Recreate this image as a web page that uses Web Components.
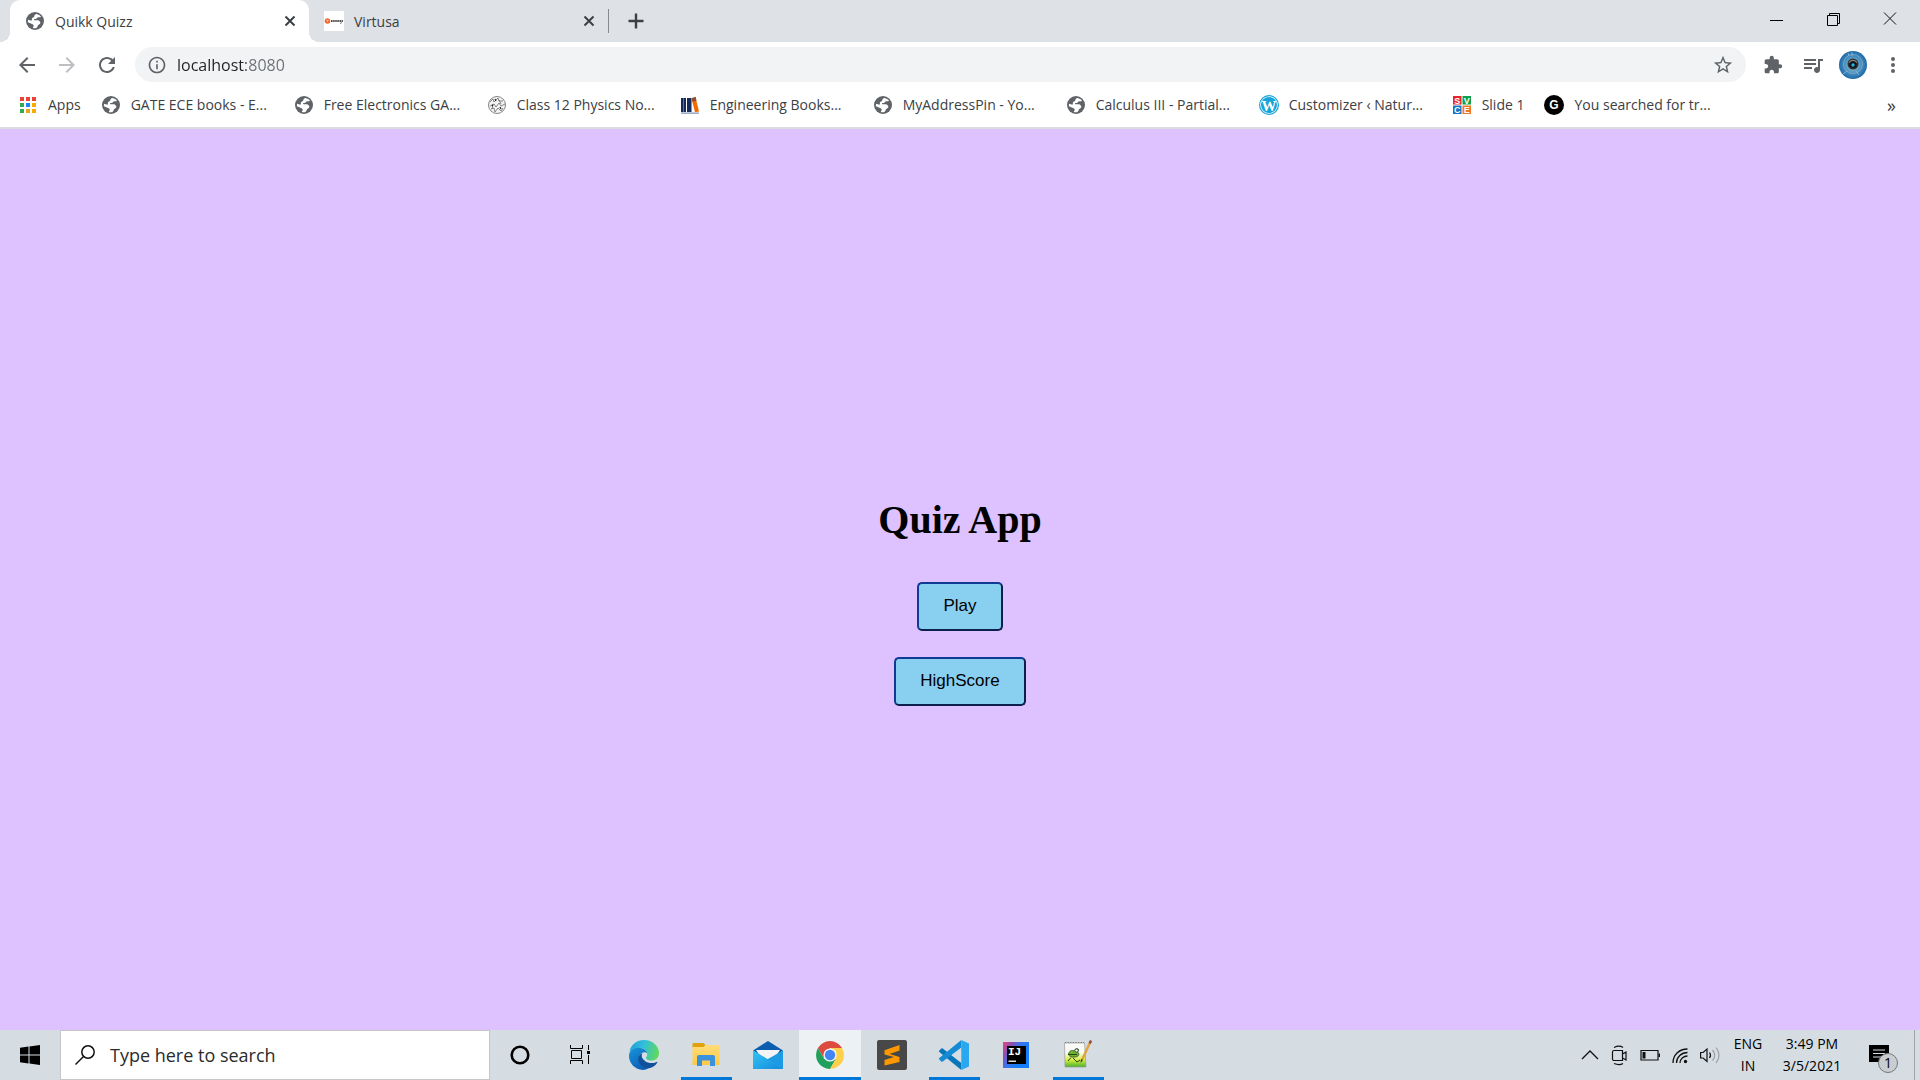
<!DOCTYPE html>
<html lang="en">
<head>
<meta charset="utf-8">
<title>Quikk Quizz</title>
<style>
  html, body { margin: 0; height: 100%; }
  body { font-family: "Open Sans", "Noto Sans", sans-serif; font-size: 14px; color: #3c4043; }
</style>
</head>
<body>
<desktop-screen>
  <browser-chrome slot="top"></browser-chrome>
  <quiz-home></quiz-home>
  <task-bar slot="bottom"></task-bar>
</desktop-screen>

<script>
const globe = `<circle cx="10" cy="10" r="9" fill="#5f6368"/>
  <path d="M11.500 2.900c2 .4 3.500 1.300 4.500 2.900-1 .9-2.200.4-3.300.7-1 .3-.8 1.200-1.800 1.500-.8.200-1.400-.2-1.800.3-.3.600.3 1 1 1h2.700c1.500.2 2.400 1.300 2.600 2.600-.4 1.300-1.600 1.300-2.200 2.200-.6 1-.6 2.200-1.800 2.900-1 .4-2.400.3-3.500-.1 0-.9.900-1.500.8-2.400-.1-.8-1-1.200-1.700-1.500l-4.100-1.700c-.1-1 0-1.800.2-2.600 1.300.1 2.200 1 3.400.9.700-.2.400-1 .3-1.700.1-1 1.300-1.200 2-1.800.8-.8.500-1.600 1.100-2.300.4-.5 1-.8 1.600-.9z" fill="#fff"/>`;

const ICONS = {
  globe: [20, globe],
  close: [20, `<path d="M5.500 5.500l9 9m0-9l-9 9" stroke="#3c4043" stroke-width="2"/>`],
  plus: [20, `<path d="M10 2.500v15M2.500 10h15" stroke="#3c4043" stroke-width="2.400"/>`],
  examly: [20, `<path fill="#fff" d="M0 0h20v20H0z"/><circle cx="3.500" cy="10" r="2.800" fill="#f26a2e"/><path d="M2.300 9.300h2.500M3.500 9v2" stroke="#fbb" stroke-width=".8"/><path d="M7 10h12" stroke="#555" stroke-width="1.800" stroke-dasharray="1.600 .5"/><path d="M17.500 11l-1 2" stroke="#777"/>`],
  back: [24, `<path fill="#5f6368" d="M20 11H7.830l5.590-5.590L12 4l-8 8 8 8 1.410-1.410L7.830 13H20v-2z"/>`],
  forward: [24, `<path fill="#bdbfc2" d="M4 11h12.170l-5.590-5.590L12 4l8 8-8 8-1.410-1.410L16.170 13H4v-2z"/>`],
  reload: [24, `<path fill="#5f6368" d="M17.650 6.350C16.200 4.900 14.210 4 12 4c-4.420 0-7.990 3.580-7.990 8s3.570 8 7.990 8c3.730 0 6.840-2.550 7.730-6h-2.080c-.82 2.330-3.040 4-5.650 4-3.310 0-6-2.690-6-6s2.690-6 6-6c1.660 0 3.140.69 4.220 1.780L13 11h7V4l-2.350 2.350z"/>`],
  info: [24, `<path fill="#5f6368" d="M11 17h2v-6h-2v6zm1-15C6.480 2 2 6.480 2 12s4.480 10 10 10 10-4.480 10-10S17.520 2 12 2zm0 18c-4.410 0-8-3.590-8-8s3.590-8 8-8 8 3.590 8 8-3.590 8-8 8zM11 9h2V7h-2v2z"/>`],
  star: [24, `<path fill="#5f6368" d="M22 9.240l-7.190-.62L12 2 9.190 8.630 2 9.240l5.460 4.730L5.820 21 12 17.270 18.180 21l-1.630-7.030L22 9.240zM12 15.400l-3.760 2.270 1-4.280-3.320-2.880 4.380-.38L12 6.100l1.710 4.040 4.380.38-3.320 2.880 1 4.280L12 15.400z"/>`],
  puzzle: [24, `<path fill="#5f6368" d="M20.500 11H19V7c0-1.100-.9-2-2-2h-4V3.500C13 2.120 11.880 1 10.500 1S8 2.120 8 3.500V5H4c-1.100 0-1.990.9-1.990 2v3.800H3.500c1.490 0 2.700 1.210 2.700 2.700s-1.210 2.700-2.700 2.700H2V20c0 1.100.9 2 2 2h3.800v-1.500c0-1.490 1.210-2.700 2.700-2.700 1.490 0 2.700 1.210 2.700 2.700V22H17c1.100 0 2-.9 2-2v-4h1.500c1.380 0 2.500-1.120 2.500-2.500S21.880 11 20.500 11z"/>`],
  music: [24, `<path fill="#5f6368" d="M15 6H3v2h12V6zm0 4H3v2h12v-2zM3 16h8v-2H3v2zM17 6v8.180c-.31-.11-.65-.18-1-.18-1.660 0-3 1.340-3 3s1.340 3 3 3 3-1.340 3-3V8h3V6h-5z"/>`],
  avatar: [28, `<defs><radialGradient id="a"><stop offset=".25" stop-color="#8fb6cb"/><stop offset=".55" stop-color="#4e94c2"/><stop offset="1" stop-color="#1e69a8"/></radialGradient></defs><circle cx="14" cy="14" r="14" fill="url(#a)"/><circle cx="14" cy="13" r="9.500" fill="none" stroke="#7db0cf" stroke-width=".8"/><path d="M13 1v4M9 2l1 3M4 23l4-3M20 24l-3-4" stroke="#9cc3da" stroke-width=".7"/><circle cx="14" cy="13" r="5.500" fill="#2b2e33"/><path d="M9.500 11.500a5 5 0 0 1 9 0l-2 .5h-5z" fill="#8d8c86"/><circle cx="14" cy="13.500" r="3.500" fill="#10151d"/><circle cx="14" cy="14" r="1.700" fill="#25b4dc"/>`],
  dots: [20, `<g fill="#5f6368"><circle cx="10" cy="4" r="2"/><circle cx="10" cy="10" r="2"/><circle cx="10" cy="16" r="2"/></g>`],
  apps: [20, `<path fill="#ea4335" d="M2 2h4v4H2zm6 0h4v4H8zm6 0h4v4h-4z"/><path fill="#34a853" d="M2 8h4v4H2zm0 6h4v4H2z"/><path fill="#1a87f0" d="M8 8h4v4H8z"/><path fill="#f9ab00" d="M14 8h4v4h-4zm0 6h4v4h-4z"/><path fill="#e9a51b" d="M8 14h4v4H8z"/>`],
  physics: [20, `<circle cx="10" cy="10" r="8.500" fill="#f4f4f4" stroke="#777" stroke-width=".9"/><path d="M3 7l3-3 1 3 4-4 1 3 4 0M3 11l4-2 2 3 3-4 2 3 4-2M4 14l3-1 1 4 3-4 3 3 2-3M6 9l-1 5M12 5l2 4" fill="none" stroke="#777" stroke-width=".9"/><path d="M8 4l1 2M13 12l1 2M5 10l1 1" stroke="#222" stroke-width="1.200"/>`],
  books: [20, `<path fill="#152c5b" d="M1 3h5v14H1zm6 0h4v14H7z"/><path stroke="#7d91b5" stroke-width=".7" d="M3.500 3v14"/><path fill="#f26a00" d="M11.500 3.500l4-1.500 3.500 14.500-4 .8z"/><path fill="#914f2f" d="M11.500 3.200l4-1.500 1 4-4 1z"/><path fill="#8195b6" d="M11 3h1v14h-1zM1 17.500h18v1.200H1z"/>`],
  wordpress: [20, `<circle cx="10" cy="10" r="9.400" fill="#fff" stroke="#16a4da" stroke-width="1.200"/><circle cx="10" cy="10" r="8" fill="#16a4da"/><text x="10" y="15.500" text-anchor="middle" font-family="Liberation Serif" font-size="15" font-weight="700" fill="#fff">W</text>`],
  svce: [20, `<path fill="#e8232a" d="M1 1h8.500v8.500H1z"/><path fill="#0ea04b" d="M10.500 1H19v8.500h-8.500z"/><path fill="#1574c4" d="M1 10.500h8.500V19H1z"/><path fill="#ee7722" d="M10.500 10.500H19V19h-8.500z"/><g fill="#fff" font-family="Liberation Sans" font-weight="700" font-size="9" text-anchor="middle"><text x="5.300" y="8.500">S</text><text x="14.800" y="8.500">V</text><text x="5.300" y="18">C</text><text x="14.800" y="18">E</text></g>`],
  gmark: [20, `<circle cx="10" cy="10" r="10"/><text x="10" y="14.200" text-anchor="middle" font-family="Liberation Sans" font-size="12" font-weight="700" fill="#fff">G</text>`],
  min: [20, `<path d="M4 12.500h13" stroke="#000"/>`],
  max: [20, `<path d="M4.500 7.500h10v10h-10zM6.500 7.500v-2h10v10h-2" fill="none" stroke="#000"/>`],
  exit: [20, `<path d="M4 4.500l12 12m0-12l-12 12" stroke="#111"/>`],
  windows: [20, `<path d="M0 2.800L8.500 1.600V9.500H0zM9.500 1.400L20 0v9.500H9.500zM0 10.500h8.500v8L0 17.300zM9.500 10.500H20V20L9.500 18.600z"/>`],
  search: [20, `<circle cx="13" cy="7" r="6.200" fill="none" stroke="#111" stroke-width="1.500"/><path d="M8.500 11.500L.5 19.500" stroke="#111" stroke-width="1.500"/>`],
  cortana: [20, `<circle cx="10" cy="10" r="8.300" fill="none" stroke="#000" stroke-width="2.600"/>`],
  taskview: [20, `<path d="M.5 0v3.500h12V0M.5 19v-3.500h12V19M1.500 5.500h10v8h-10zM18.500 0v5M18.500 10v9" fill="none" stroke="#000"/><path d="M17 6h3v3h-3z"/>`],
  edge: [32, `<defs><linearGradient id="e1" x1="0" y1=".3" x2="1" y2=".5"><stop offset="0" stop-color="#219fd8"/><stop offset=".45" stop-color="#31bfdc"/><stop offset="1" stop-color="#60d95a"/></linearGradient><linearGradient id="e2" x1="0" y1="0" x2=".5" y2="1"><stop offset="0" stop-color="#1795da"/><stop offset="1" stop-color="#0e60b5"/></linearGradient></defs>
    <path fill="url(#e1)" d="M1.500 13C2.500 5.500 9 1 16 1c9 0 15 6.500 15 13 0 5-3.500 7.500-7.500 7.500-4 0-5.500-1.700-5.500-2.600 0-.8 1.200-1.300 1.200-3.600 0-3-3-6.300-7.700-6.300C6 9 2.500 11.500 1.500 13z"/>
    <path fill="url(#e2)" d="M1 17C1 12 5 8.800 10.500 8.800c4.500 0 8.200 2.800 8.700 5.400-1-1-2-1.200-3.200-1-4 .8-5.500 4-4.500 7.800 1.200 4.500 5 7.500 9.500 7.800C19 30.400 17 31 15 31 7 30.500 1 24.500 1 17z"/>
    <path fill="#11519c" d="M12 15.500C10 18 9.500 22 12 25.300c2.500 3.500 6.500 4.300 10 3.700 3-.8 5.800-2.800 7.300-5.500.3-.6-.2-.9-.7-.6-4 2-8.800 1.400-11.500-.9-2.400-1.900-4.600-4.500-2.600-7.800-.8.1-1.800.5-2.500 1.300z"/>`],
  folder: [32, `<defs><linearGradient id="f" x1="0" y1="0" x2="0" y2="1"><stop offset="0" stop-color="#ffdc7a"/><stop offset="1" stop-color="#fdc943"/></linearGradient></defs><path fill="#e0a10a" d="M2.500 5c0-.6.400-1 1-1h10l2 2-2 3h-11z"/><path fill="url(#f)" d="M2.500 8h11l2-2h13c.6 0 1 .4 1 1v19h-27z"/><path fill="#3a92dc" d="M7 27V18c0-1.200.8-2 2-2h14c1.200 0 2 .8 2 2v9h-5v-5.500h-8V27z"/>`],
  mail: [32, `<defs><linearGradient id="m" x1="0" y1="0" x2="1" y2="1"><stop offset="0" stop-color="#32c5f4"/><stop offset="1" stop-color="#1689dd"/></linearGradient></defs><path fill="#0c5caf" d="M1 11.500L16 2l15 9.500-15 11z"/><path fill="#f4f4f4" d="M4 11h24l-6 9H10z"/><path fill="#28b5ee" d="M1 11.500L31 30H1z"/><path fill="#1d9ae4" d="M31 11.500V30L15 20.500z"/><path fill="url(#m)" d="M1 11.500l16 9.500L31 30H1z"/>`],
  chrome: [32, `<path fill="#dd4b3e" d="M3.900 9A14 14 0 0 1 28.100 9H16l-6 10.500z"/><path fill="#1fa05d" d="M3.900 9A14 14 0 0 0 16 30l6.100-10.500L16 22l-6.100-2.500z"/><path fill="#fed049" d="M28.100 9A14 14 0 0 1 16 30l6.100-10.500L22 12l-6-3z"/><circle cx="16" cy="16" r="6.600" fill="#f3f3f3"/><circle cx="16" cy="16" r="5.200" fill="#4285f4"/>`],
  sublime: [32, `<rect x="1" y="1" width="30" height="30" rx="2" fill="#484848"/><path fill="#ff9800" d="M8.500 11.200L23.500 6v5.500L13.500 15l10 3v5L8.500 26.500V21l9.500-3-9.500-2.500z"/>`],
  vscode: [32, `<path fill="#0877ba" d="M1.300 11.500l2-2c.5-.4 1-.4 1.500 0L23.300 24v7L1.300 13c-.5-.5-.5-1 0-1.500z"/><path fill="#148bd2" d="M1.300 20.500l2 2c.5.4 1 .4 1.500 0L23.300 8.500V1L1.300 19c-.5.500-.5 1 0 1.500z"/><path fill="#29a8ef" d="M23.300 1L31 4.500v23L23.300 31z"/>`],
  idea: [32, `<defs><linearGradient id="j" x1="0" y1="0" x2=".8" y2=".5"><stop offset="0" stop-color="#e8467c"/><stop offset=".35" stop-color="#8c4eb5"/><stop offset=".6" stop-color="#3f72e8"/><stop offset="1" stop-color="#157dfa"/></linearGradient></defs><path fill="url(#j)" d="M3 3h26v26H3z"/><path d="M7 7h19v18H7z"/><text x="8" y="16" font-family="Liberation Mono" font-size="11" font-weight="700" fill="#fff">IJ</text><path fill="#ddd" d="M8.500 21.500H16V23H8.500z"/>`],
  notepad: [32, `<defs><linearGradient id="n" x1="0" y1="0" x2="0" y2="1"><stop offset=".4" stop-color="#f9faf5"/><stop offset=".7" stop-color="#d8ed3e"/><stop offset="1" stop-color="#46b32c"/></linearGradient></defs><path fill="url(#n)" stroke="#999" stroke-width=".7" d="M2.500 4h20l1.500 24H3z"/><path stroke="#777" stroke-dasharray="1.200 1.400" d="M3 3.500h19"/><path fill="#6cb52c" stroke="#24431a" stroke-width=".7" d="M6.500 15c.5-3 3.500-4.500 5.500-3 1-2.500 4-3 4.500-1.500s-1 2.500-1 2.500c2.500 2 1.500 4.500-2 5s-7-.5-7-3z"/><circle cx="14.500" cy="11.500" r="1.600" fill="#fff" stroke="#222" stroke-width=".7"/><path d="M9 18.500L6 22m5-3l4 4 3-2M6 15.500h9" stroke="#24431a" stroke-width="1" fill="none"/><path d="M28.500 2.500L20 21" stroke="#e0a23c" stroke-width="2.400"/><path d="M29 1.500l-1.300 3" stroke="#914b44" stroke-width="2.400"/><path fill="#333" d="M19 20l2 1-2.500 3z"/>`],
  chevron: [20, `<path d="M2 14l8-8 8 8" fill="none" stroke="#111" stroke-width="1.300"/>`],
  meet: [20, `<path d="M4 5.500h8.500v10H4c-.8 0-1.500-.7-1.500-1.500V7c0-.8.7-1.500 1.500-1.500zM12.500 9l3.500-2v8l-3.500-2zM4 2.500c3-1.500 7-1.500 9 0M4 18.500c3 1.200 7 1.200 9 0" fill="none" stroke="#111" stroke-width="1.200"/>`],
  battery: [20, `<path d="M1 5.500h17v9.500H1z" fill="none" stroke="#111" stroke-width="1.200"/><path d="M2.500 7H5.500v6.500H2.500zM18.500 8.500H20V12h-1.500z" fill="#111"/>`],
  wifi: [20, `<g fill="none" stroke="#111" stroke-width="1.300"><path d="M3 18C3 10 9 4 17.500 4" /><path d="M6.500 18c0-6 5-10.500 11-10.500"/><path d="M10 18c0-4 3.500-7 7.500-7"/></g><circle cx="15.500" cy="16.500" r="1.700" fill="#111"/>`],
  volume: [20, `<path d="M.6 7.500h2.500L7 4v12.500L3.100 13H.6z" fill="none" stroke="#111" stroke-width="1.200"/><path d="M9.500 7.500c1.500 2 1.500 3.500 0 5.500" fill="none" stroke="#111" stroke-width="1.200"/><path d="M12.500 5c3 3.500 3 7 0 10.500M16 2.500c4 5 4 10.500 0 15.500" fill="none" stroke="#999fa4" stroke-width="1.200"/>`],
  notes: [22, `<path d="M1 1h20v17h-6v4l-4-4H1z"/><path d="M5 6h12M5 9.500h12M5 13h12" stroke="#d5dde3" stroke-width="1.200"/>`]
};

function define(name, html, setup) {
  const template = document.createElement('template');
  template.innerHTML = html;
  customElements.define(name, class extends HTMLElement {
    connectedCallback() {
      if (this.shadowRoot) return;
      this.attachShadow({ mode: 'open' }).append(template.content.cloneNode(true));
      if (setup) setup(this, this.shadowRoot);
    }
  });
}

define('app-icon', `<style>:host{display:block;flex:none;line-height:0}svg{display:block;overflow:visible}</style>`, (host, root) => {
  const [box, art] = ICONS[host.getAttribute('name')];
  const size = host.getAttribute('size') || box;
  const holder = document.createElement('div');
  holder.innerHTML = `<svg width="${size}" height="${size}" viewBox="0 0 ${box} ${box}" aria-hidden="true">${art}</svg>`;
  root.append(holder.firstChild);
});

define('icon-button', `
  <style>
    :host { display: block; flex: none; }
    button { width: 100%; height: 100%; min-height: 20px; border: 0; padding: 0; background: none; display: flex; align-items: center; justify-content: center; }
  </style>
  <button><slot></slot></button>`,
  (host, root) => root.querySelector('button').setAttribute('aria-label', host.getAttribute('label')));

define('browser-tab', `
  <style>
    :host { display: flex; align-items: center; box-sizing: border-box; width: 299px; height: 42px; padding: 0 9px 0 15px; position: relative; }
    :host([active]) { background: #fff; border-radius: 10px 10px 0 0; }
    :host([active])::before, :host([active])::after { content: ""; position: absolute; bottom: 0; width: 10px; height: 10px; }
    :host([active])::before { right: 100%; background: radial-gradient(circle at 0 0, #dee1e6 10px, #fff 10px); }
    :host([active])::after { left: 100%; background: radial-gradient(circle at 100% 0, #dee1e6 10px, #fff 10px); }
    .title { flex: 1; margin-left: 10px; white-space: nowrap; }
  </style>
  <slot name="icon"></slot><span class="title"><slot></slot></span>
  <icon-button label="Close tab"><app-icon name="close"></app-icon></icon-button>`);

define('bookmark-link', `
  <style>
    :host { display: block; flex: none; }
    a { display: flex; align-items: center; gap: 10px; color: inherit; text-decoration: none; white-space: nowrap; }
    :host([wide]) a { width: 173px; }
  </style>
  <a href="#"><span><slot></slot></span></a>`,
  (host, root) => {
    const icon = document.createElement('app-icon');
    icon.setAttribute('name', host.getAttribute('icon'));
    root.querySelector('a').prepend(icon);
  });

define('browser-chrome', `
  <style>
    :host { display: block; background: #fff; border-bottom: 2px solid #d9dce0; }
    .strip { display: flex; background: #dee1e6; height: 42px; padding: 0 2px 0 10px; }
    .strip .new { width: 54px; border-left: 1px solid #85888d; height: 24px; margin-top: 9px; }
    .window { margin-left: auto; display: flex; }
    .window icon-button { width: 57px; height: 36px; }
    .tools { display: flex; align-items: center; height: 35px; padding: 5px 7px 0; }
    .tools > icon-button { width: 40px; }
    .address { flex: 1; display: flex; align-items: center; height: 35px; margin: 0 7px 0 8px; padding: 0 12px; border-radius: 18px; background: #f1f3f4; }
    input { flex: 1; min-width: 0; border: 0; outline: 0; padding: 0; margin: 0 10px; font: inherit; font-size: 16px; height: 24px; color: #202124;
      background: linear-gradient(90deg, #202124 69px, #6b6f74 69px); -webkit-background-clip: text; background-clip: text; -webkit-text-fill-color: transparent; }
    nav { display: flex; align-items: center; gap: 20px; height: 45px; padding: 0 24px 0 18px; }
    .more { margin-left: auto; border: 0; padding: 0; background: none; font: inherit; font-size: 18px; line-height: 18px; color: #3c4043; }
  </style>
  <div class="strip">
    <browser-tab active><app-icon slot="icon" name="globe"></app-icon>Quikk Quizz</browser-tab>
    <browser-tab><app-icon slot="icon" name="examly"></app-icon>Virtusa</browser-tab>
    <icon-button class="new" label="New tab"><app-icon name="plus"></app-icon></icon-button>
    <div class="window">
      <icon-button label="Minimize"><app-icon name="min"></app-icon></icon-button>
      <icon-button label="Restore"><app-icon name="max"></app-icon></icon-button>
      <icon-button label="Close"><app-icon name="exit"></app-icon></icon-button>
    </div>
  </div>
  <div class="tools">
    <icon-button label="Back"><app-icon name="back"></app-icon></icon-button>
    <icon-button label="Forward"><app-icon name="forward"></app-icon></icon-button>
    <icon-button label="Reload"><app-icon name="reload"></app-icon></icon-button>
    <div class="address">
      <app-icon name="info" size="20"></app-icon>
      <input type="text" aria-label="Address" value="localhost:8080">
      <icon-button label="Bookmark this page"><app-icon name="star" size="22"></app-icon></icon-button>
    </div>
    <icon-button label="Extensions"><app-icon name="puzzle" size="20"></app-icon></icon-button>
    <icon-button label="Media"><app-icon name="music"></app-icon></icon-button>
    <icon-button label="Profile"><app-icon name="avatar"></app-icon></icon-button>
    <icon-button label="Menu"><app-icon name="dots"></app-icon></icon-button>
  </div>
  <nav>
    <bookmark-link icon="apps">Apps</bookmark-link>
    <bookmark-link icon="globe" wide>GATE ECE books - E...</bookmark-link>
    <bookmark-link icon="globe" wide>Free Electronics GA...</bookmark-link>
    <bookmark-link icon="physics" wide>Class 12 Physics No...</bookmark-link>
    <bookmark-link icon="books" wide>Engineering Books...</bookmark-link>
    <bookmark-link icon="globe" wide>MyAddressPin - Yo...</bookmark-link>
    <bookmark-link icon="globe" wide>Calculus III - Partial...</bookmark-link>
    <bookmark-link icon="wordpress" wide>Customizer ‹ Natur...</bookmark-link>
    <bookmark-link icon="svce">Slide 1</bookmark-link>
    <bookmark-link icon="gmark" wide>You searched for tr...</bookmark-link>
    <button class="more" aria-label="More bookmarks">»</button>
  </nav>`);

define('quiz-button', `
  <style>
    :host { display: block; }
    button { display: block; height: 49px; padding: 0 24px; font: 17px "Liberation Sans", Arial, sans-serif; color: #000; background: #89cff0; border: 2px solid; border-color: #103a94 #0c2050 #0c2050 #103a94; border-radius: 5px; }
  </style>
  <button><slot></slot></button>`);

define('quiz-home', `
  <style>
    :host { display: flex; flex: 1; flex-direction: column; align-items: center; justify-content: center; gap: 26px; padding-top: 43px; background: #dec1ff; }
    h1 { margin: 0 0 13px; font: 700 40px/46px "Liberation Serif", "Times New Roman", serif; color: #000; }
  </style>
  <h1>Quiz App</h1>
  <quiz-button>Play</quiz-button>
  <quiz-button>HighScore</quiz-button>`);

define('task-button', `
  <style>
    :host { display: block; flex: none; width: 62px; }
    button { width: 100%; height: 100%; border: 0; padding: 0; background: none; display: flex; align-items: center; justify-content: center; }
    :host([running]) button { background: linear-gradient(#0078d7, #0078d7) center bottom / 51px 3px no-repeat; }
    :host([current]) button { background: linear-gradient(#0078d7, #0078d7) center bottom / 100% 3px no-repeat #eef1f4; }
  </style>
  <button><slot></slot></button>`,
  (host, root) => root.querySelector('button').setAttribute('aria-label', host.getAttribute('label')));

define('task-bar', `
  <style>
    :host { display: flex; height: 50px; background: #d5dde3; color: #000; }
    .narrow { width: 60px; }
    .search { display: flex; align-items: center; gap: 15px; box-sizing: border-box; width: 430px; padding-left: 14px; background: #fff; border: 1px solid #c6c6c6; }
    input { flex: 1; min-width: 0; border: 0; outline: 0; padding: 0; background: none; font: inherit; font-size: 18px; }
    input::placeholder { color: #2b2b2b; opacity: 1; }
    .programs { display: flex; margin-left: 3px; }
    .tray { margin-left: auto; display: flex; align-items: center; }
    .tray icon-button { width: 30px; }
    .text { text-align: center; font-size: 14px; line-height: 22px; }
    .lang { width: 46px; }
    .clock { width: 82px; }
    .notes { position: relative; box-sizing: border-box; width: 61px; padding-left: 15px; }
    .badge { position: absolute; left: 25px; top: 9px; box-sizing: border-box; width: 20px; height: 20px; border: 1px solid #777; border-radius: 50%; background: #c8cdd2; font-size: 14px; line-height: 18px; text-align: center; }
    .peek { align-self: stretch; width: 5px; border-left: 1px solid #a0a6ab; }
  </style>
  <task-button class="narrow" label="Start"><app-icon name="windows"></app-icon></task-button>
  <label class="search"><app-icon name="search"></app-icon><input type="text" aria-label="Search" placeholder="Type here to search"></label>
  <task-button class="narrow" label="Cortana"><app-icon name="cortana"></app-icon></task-button>
  <task-button class="narrow" label="Task view"><app-icon name="taskview"></app-icon></task-button>
  <div class="programs">
    <task-button label="Edge"><app-icon name="edge"></app-icon></task-button>
    <task-button label="File Explorer" running><app-icon name="folder"></app-icon></task-button>
    <task-button label="Mail"><app-icon name="mail"></app-icon></task-button>
    <task-button label="Chrome" current><app-icon name="chrome"></app-icon></task-button>
    <task-button label="Sublime Text"><app-icon name="sublime"></app-icon></task-button>
    <task-button label="Visual Studio Code" running><app-icon name="vscode"></app-icon></task-button>
    <task-button label="IntelliJ IDEA"><app-icon name="idea"></app-icon></task-button>
    <task-button label="Notepad++" running><app-icon name="notepad"></app-icon></task-button>
  </div>
  <div class="tray">
    <icon-button label="Show hidden icons"><app-icon name="chevron"></app-icon></icon-button>
    <icon-button label="Meet now"><app-icon name="meet"></app-icon></icon-button>
    <icon-button label="Battery"><app-icon name="battery"></app-icon></icon-button>
    <icon-button label="Network"><app-icon name="wifi"></app-icon></icon-button>
    <icon-button label="Volume"><app-icon name="volume"></app-icon></icon-button>
    <div class="text lang">ENG<br>IN</div>
    <div class="text clock">3:49 PM<br>3/5/2021</div>
    <div class="notes"><app-icon name="notes"></app-icon><span class="badge">1</span></div>
    <div class="peek"></div>
  </div>`);

define('desktop-screen', `
  <style>:host { display: flex; flex-direction: column; min-height: 100vh; }</style>
  <slot name="top"></slot><slot></slot><slot name="bottom"></slot>`);
</script>
</body>
</html>
